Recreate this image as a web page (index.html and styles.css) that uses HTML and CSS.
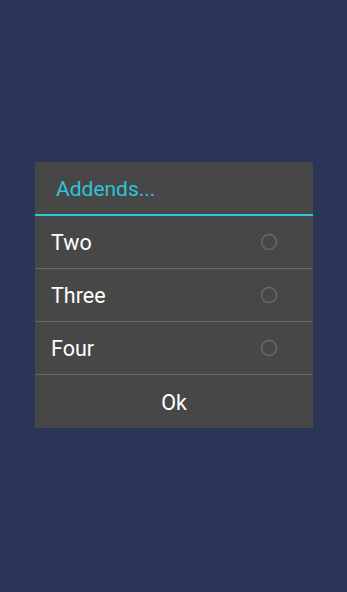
FILE: index.html
```html
<!DOCTYPE html>
<html>
<head>
<meta charset="utf-8">
<link rel="stylesheet" href="styles.css">
</head>
<body>
<div class="dialog">
  <div class="title">Addends...</div>
  <div class="title-line"></div>
  <div class="row">
    <span class="label">Two</span>
    <svg class="radio" width="18" height="18" viewBox="0 0 18 18"><circle cx="9" cy="9" r="7.5" fill="none" stroke="#686868" stroke-width="1.5"/></svg>
  </div>
  <div class="divider"></div>
  <div class="row">
    <span class="label">Three</span>
    <svg class="radio" width="18" height="18" viewBox="0 0 18 18"><circle cx="9" cy="9" r="7.5" fill="none" stroke="#686868" stroke-width="1.5"/></svg>
  </div>
  <div class="divider"></div>
  <div class="row">
    <span class="label">Four</span>
    <svg class="radio" width="18" height="18" viewBox="0 0 18 18"><circle cx="9" cy="9" r="7.5" fill="none" stroke="#686868" stroke-width="1.5"/></svg>
  </div>
  <div class="divider"></div>
  <div class="button">Ok</div>
</div>
</body>
</html>
```
FILE: styles.css
```css
html, body {
  margin: 0;
  padding: 0;
  background: #2b3558;
  height: 100%;
}
body {
  font-family: Roboto, "Noto Sans", sans-serif;
  padding-top: 162px;
  box-sizing: border-box;
}
.dialog {
  margin-left: 35px;
  width: 278px;
  background: #474747;
}
.title {
  height: 52px;
  display: flex;
  align-items: center;
  padding-left: 21px;
  color: #2ec4dc;
  font-size: 21px;
  padding-top: 1px;
  box-sizing: border-box;
}
.title-line {
  height: 2px;
  background: #2ec4dc;
}
.row {
  height: 52px;
  display: flex;
  align-items: center;
  justify-content: space-between;
  padding-left: 16px;
  padding-right: 35px;
  color: #ffffff;
  font-size: 21.5px;
}
.radio {
  display: block;
}
.divider {
  height: 1px;
  background: #666666;
}
.button {
  height: 53px;
  display: flex;
  align-items: center;
  justify-content: center;
  color: #ffffff;
  font-size: 21.5px;
  padding-top: 2px;
  box-sizing: border-box;
}
```
